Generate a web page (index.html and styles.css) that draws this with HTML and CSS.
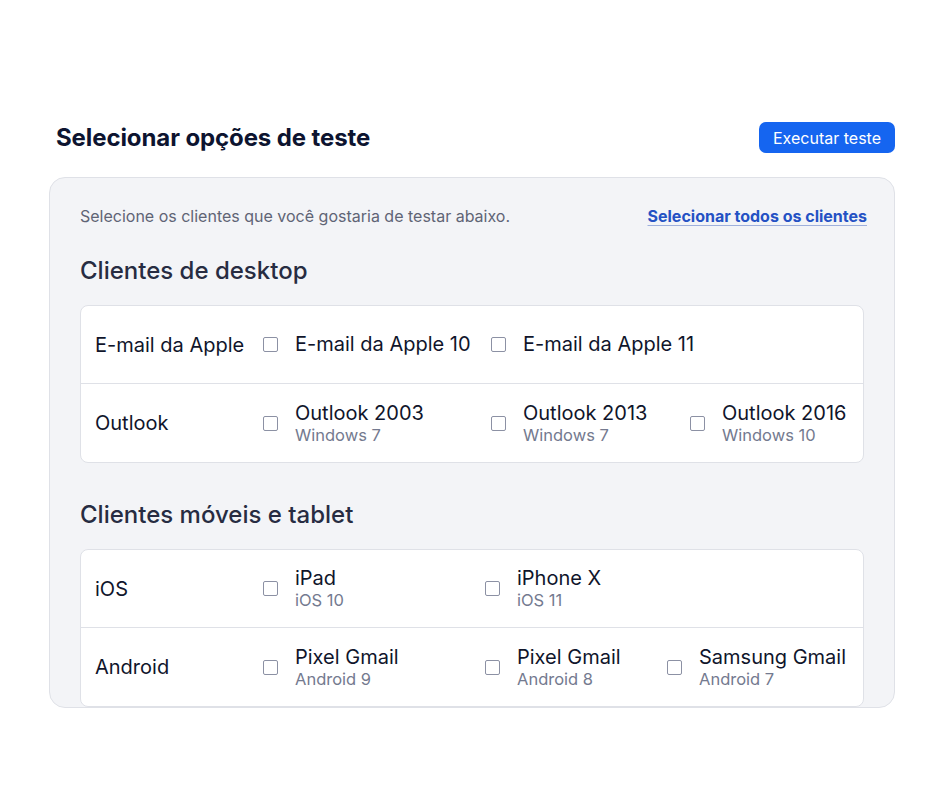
FILE: index.html
```html
<!DOCTYPE html>
<html lang="pt-BR">
<head>
    <meta charset="UTF-8">
    <meta name="viewport" content="width=device-width, initial-scale=1.0">
    <title>Selecionar opções de teste</title>
    <link rel="stylesheet" href="styles.css">
</head>
<body>
    <div class="wrap">
        <div class="header">
            <h1>Selecionar opções de teste</h1>
            <button class="button">Executar teste</button>
        </div>

        <div class="panel">
            <div class="intro">
                <p>Selecione os clientes que você gostaria de testar abaixo.</p>
                <a href="#" class="select-all">Selecionar todos os clientes</a>
            </div>

            <h2>Clientes de desktop</h2>
            <div class="clients desktop">
                <div class="row">
                    <div class="group">E-mail da Apple</div>
                    <label class="option"><span class="box"></span><span class="name">E-mail da Apple 10</span></label>
                    <label class="option"><span class="box"></span><span class="name">E-mail da Apple 11</span></label>
                </div>
                <div class="row">
                    <div class="group">Outlook</div>
                    <label class="option"><span class="box"></span><span class="name">Outlook 2003<small>Windows 7</small></span></label>
                    <label class="option"><span class="box"></span><span class="name">Outlook 2013<small>Windows 7</small></span></label>
                    <label class="option"><span class="box"></span><span class="name">Outlook 2016<small>Windows 10</small></span></label>
                </div>
            </div>

            <h2>Clientes móveis e tablet</h2>
            <div class="clients mobile">
                <div class="row">
                    <div class="group">iOS</div>
                    <label class="option"><span class="box"></span><span class="name">iPad<small>iOS 10</small></span></label>
                    <label class="option"><span class="box"></span><span class="name">iPhone X<small>iOS 11</small></span></label>
                </div>
                <div class="row">
                    <div class="group">Android</div>
                    <label class="option"><span class="box"></span><span class="name">Pixel Gmail<small>Android 9</small></span></label>
                    <label class="option"><span class="box"></span><span class="name">Pixel Gmail<small>Android 8</small></span></label>
                    <label class="option"><span class="box"></span><span class="name">Samsung Gmail<small>Android 7</small></span></label>
                </div>
            </div>
        </div>
    </div>
</body>
</html>
```

FILE: styles.css
```css
body {
    margin: 0;
    background: #ffffff;
    font-family: Inter, "Noto Sans", sans-serif;
    color: #10152b;
}
.wrap {
    width: 846px;
    margin: 0 auto;
    padding-top: 122px;
}
.header {
    display: flex;
    justify-content: space-between;
    align-items: center;
    padding-left: 7px;
    margin-bottom: 24px;
}
h1 {
    margin: 0;
    font-size: 24px;
    font-weight: 700;
    color: #0d1430;
    letter-spacing: -0.1px;
}
.button {
    background: #1565f0;
    color: white;
    border: none;
    height: 31px;
    padding: 0 14px;
    border-radius: 7px;
    font-family: inherit;
    font-size: 16px;
    cursor: pointer;
}
.panel {
    background: #f3f4f7;
    border: 1.5px solid #dfe1e7;
    border-radius: 16px;
    height: 531px;
    overflow: hidden;
    padding: 28px 30px 0 30px;
    box-sizing: border-box;
}
.intro {
    display: flex;
    justify-content: space-between;
    align-items: center;
    margin-bottom: 30px;
}
.intro p {
    margin: 0;
    font-size: 16px;
    color: #5f6475;
}
.select-all {
    font-size: 16px;
    font-weight: 700;
    color: #2451c4;
    text-decoration: underline;
    text-decoration-color: #9fb0dc;
    text-underline-offset: 3px;
    margin-right: -3px;
}
h2 {
    margin: 0 0 20px 0;
    font-size: 24px;
    font-weight: 500;
    color: #272c42;
}
.clients {
    background: white;
    border: 1.5px solid #dfe1e7;
    border-radius: 8px;
    margin-bottom: 37px;
}
.row {
    display: grid;
    align-items: center;
    padding: 0 14px;
    height: 77px;
}
.row + .row {
    border-top: 1.5px solid #dfe1e7;
    height: 78px;
}
.desktop .row {
    grid-template-columns: 168px 228px 199px auto;
}
.mobile .row {
    grid-template-columns: 168px 222px 182px auto;
}
.group {
    font-size: 20px;
}
.option {
    display: flex;
    align-items: center;
    gap: 17px;
    font-size: 20px;
    white-space: nowrap;
}
.box {
    width: 15px;
    height: 15px;
    border: 1.5px solid #8c91a4;
    border-radius: 2px;
    box-sizing: border-box;
    flex-shrink: 0;
}
.name {
    display: flex;
    flex-direction: column;
    line-height: 23px;
}
.name small {
    font-size: 16.5px;
    line-height: 20px;
    color: #747a8f;
}
```
